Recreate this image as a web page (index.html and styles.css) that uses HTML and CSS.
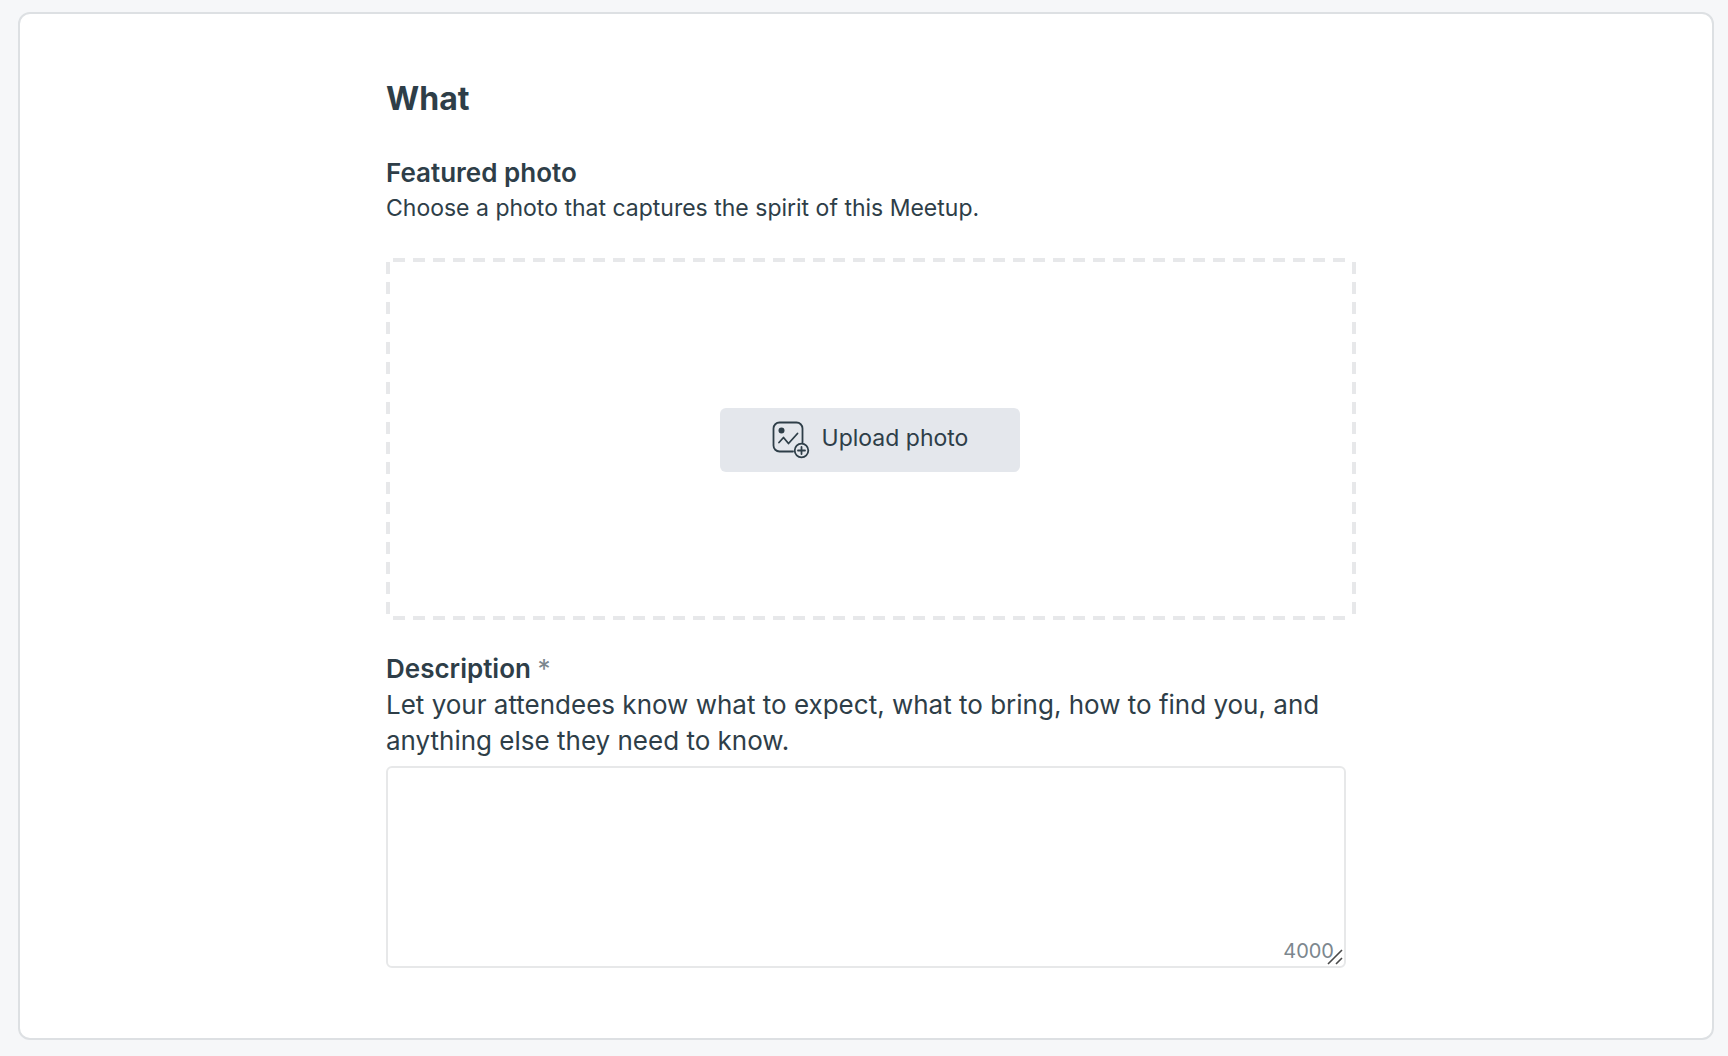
FILE: index.html
```
<!DOCTYPE html>
<html lang="en">
<head>
  <meta charset="utf-8">
  <meta name="viewport" content="width=device-width, initial-scale=1">
  <title>What</title>
  <link rel="stylesheet" href="styles.css">
</head>
<body>
  <main class="card">
    <form class="form">
      <h2 class="title">What</h2>

      <section class="photo">
        <h3 class="label">Featured photo</h3>
        <p class="hint">Choose a photo that captures the spirit of this Meetup.</p>
        <div class="dropzone">
          <button class="upload" type="button">
            <svg class="upload-icon" viewBox="0 0 38 38" aria-hidden="true">
              <path d="M21 30.500H7.500a6 6 0 0 1-6-6V7.500a6 6 0 0 1 6-6h17a6 6 0 0 1 6 6V21.500" />
              <path d="M7 21.500 11.500 16.500l5 6 9-10" />
              <circle class="dot" cx="9.500" cy="9.500" r="3" />
              <circle cx="29.500" cy="29.500" r="6.800" />
              <path d="M29.500 26v7M26 29.500h7" />
            </svg>
            <span class="upload-text">Upload photo</span>
          </button>
        </div>
      </section>

      <section class="description">
        <label class="label" for="description">Description <span class="required">*</span></label>
        <p class="help" id="description-help">Let your attendees know what to expect, what to bring, how to find you, and anything else they need to know.</p>
        <div class="field">
          <textarea class="textarea" id="description" maxlength="4000" aria-describedby="description-help" required></textarea>
          <span class="count">4000</span>
          <svg class="grip" viewBox="0 0 16 16" aria-hidden="true">
            <path d="M1 15 15 1M9 15l6-6" />
          </svg>
        </div>
      </section>
    </form>
  </main>
</body>
</html>
```
FILE: styles.css
```
* {
  box-sizing: border-box;
}

body {
  margin: 0;
  padding: 12px 14px 16px 18px;
  background: #f6f7f9;
  color: #2e3e48;
  font-family: Inter, "Liberation Sans", sans-serif;
}

h2,
h3,
p {
  margin: 0;
}

.card {
  padding: 63px 24px 70px;
  background: #fff;
  border: 2px solid #dde0e3;
  border-radius: 12px;
}

.form {
  max-width: 960px;
  margin: 0 auto;
}

.title {
  margin-bottom: 34px;
  font-size: 32px;
  font-weight: 700;
  line-height: 44px;
}

.label {
  display: block;
  font-size: 26px;
  font-weight: 600;
  line-height: 36px;
}

.hint {
  font-size: 23px;
  line-height: 34px;
}

.dropzone {
  --dash-x: repeating-linear-gradient(to right, #e7e8ea 0 12px, transparent 12px 20px);
  --dash-y: repeating-linear-gradient(to bottom, #e7e8ea 0 12px, transparent 12px 20px);
  display: flex;
  align-items: center;
  justify-content: center;
  min-height: 362px;
  margin: 33px -10px 31px 0;
  padding: 2px 2px 0 0;
  background:
    var(--dash-x) 7px 0 / calc(100% - 14px) 4px no-repeat,
    var(--dash-x) 7px 100% / calc(100% - 14px) 4px no-repeat,
    var(--dash-y) 0 4px / 4px calc(100% - 8px) no-repeat,
    var(--dash-y) 100% 4px / 4px calc(100% - 8px) no-repeat;
}

.upload {
  display: flex;
  align-items: center;
  justify-content: center;
  gap: 12px;
  width: 300px;
  height: 64px;
  padding: 0;
  border: 0;
  border-radius: 6px;
  background: #e4e7ec;
  color: inherit;
  font: 23px/32px Inter, "Liberation Sans", sans-serif;
}

.upload-icon {
  width: 38px;
  height: 38px;
  fill: none;
  stroke: #2e3e48;
  stroke-width: 1.8;
  stroke-linecap: round;
  stroke-linejoin: round;
}

.upload-icon .dot {
  fill: #2e3e48;
  stroke: none;
}

.upload-text {
  padding-bottom: 4px;
}

.required {
  color: #7c878e;
  font-weight: 400;
}

.help {
  font-size: 26px;
  line-height: 36px;
}

.field {
  position: relative;
  margin-top: 7px;
}

.textarea {
  display: block;
  width: 100%;
  height: 202px;
  padding: 14px;
  border: 2px solid #e7e8e9;
  border-radius: 6px;
  background: #fff;
  color: inherit;
  font: 26px/36px Inter, "Liberation Sans", sans-serif;
  resize: none;
}

.count {
  position: absolute;
  right: 12px;
  bottom: 4px;
  color: #7c878e;
  font-size: 20px;
  line-height: 26px;
}

.grip {
  position: absolute;
  right: 3px;
  bottom: 3px;
  width: 16px;
  height: 16px;
  fill: none;
  stroke: #4a4a4a;
  stroke-width: 1.6;
}
```
